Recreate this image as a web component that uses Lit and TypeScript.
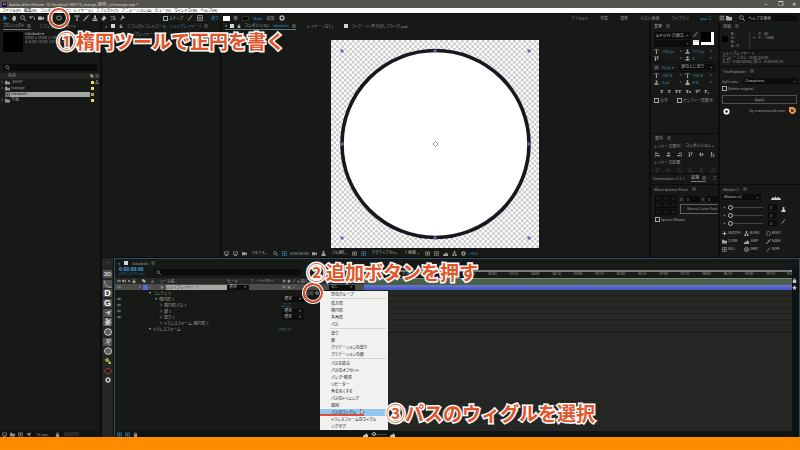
import { LitElement, html, svg, css, nothing } from "lit";
import { customElement } from "lit/decorators.js";
import { classMap } from "lit/directives/class-map.js";

// Icon drawings on a 12 x 12 grid; they take the colour of the surrounding text.
const line = (d: string, w = 1.6) => svg`<path d=${d} fill="none" stroke="currentColor" stroke-width=${w} />`;
const solid = (d: string) => svg`<path d=${d} fill="currentColor" />`;
const ICONS: Record<string, unknown> = {
  arrow: solid("M3 0L11 8L7 8L3 12Z"),
  hand: solid("M2 6L3 5L4 6V2H5.5V1H7V2H8.5V3H10V8L8 12H5L2 8Z"),
  zoom: svg`${line("M8 8L11.5 11.5", 2)}<circle cx="5" cy="5" r="3.6" fill="none" stroke="currentColor" stroke-width="1.5"/>`,
  rotate: line("M2 2V6H6M2.5 5.5C5 1 11 3 11 8V10"),
  camera: solid("M0 3H8V10H0ZM8 6L12 3V10L8 8Z"),
  anchor: svg`${line("M1 1H11V11H1Z", 1.4)}${line("M6 3V9M3 6H9")}`,
  ellipse: svg`<ellipse cx="6" cy="6" rx="5" ry="4" fill="none" stroke="currentColor" stroke-width="1.5"/>`,
  type: solid("M1 1H11V4H10L9 2.6H7V11H8V12H4V11H5V2.6H3L2 4H1Z"),
  brush: solid("M11 0L12 1L5 9L3 7ZM2.5 8L4.5 10L1 12L0 11Z"),
  stamp: solid("M4 1H8V4L7 7H11V9H1V7H5L4 4ZM1 10H11V12H1Z"),
  eraser: solid("M6 1L11 6L6 11H3L1 8Z"),
  roto: line("M1 2L4 5L7 2L10 6V11M2 10L9 7"),
  pin: solid("M6 0L12 6L10 7L8 6L5 9L1 12L4 8L6 4Z"),
  menu: line("M1 2.5H11M1 6H11M1 9.5H11", 1.5),
  down: solid("M2 4H10L6 9Z"),
  right: line("M4 2L8 6L4 10", 1.8),
  tag: solid("M0 1H6L12 7L7 12L0 6Z"),
  net: svg`${line("M6 3V6M3 9V6H9V9", 1.3)}${solid("M4 0H8V4H4ZM1 8H5V12H1ZM7 8H11V12H7Z")}`,
  folder: solid("M0 2H5L6 4H12V11H0Z"),
  comp: svg`${line("M1 2H11V10H1Z")}${solid("M4 4H8V8H4Z")}`,
  lock: svg`${solid("M2 5H10V12H2Z")}${line("M4 5V2H8V5")}`,
  eye: svg`${line("M0 6Q6 0 12 6Q6 12 0 6Z")}<circle cx="6" cy="6" r="2" fill="currentColor"/>`,
  dot: svg`<circle cx="6" cy="6" r="3" fill="currentColor"/>`,
  sound: solid("M0 4H3L6 1V11L3 8H0ZM8 3L11 1V11L8 9Z"),
  star: solid("M6 0L7.6 4.2L12 4.5L8.7 7.4L9.8 12L6 9.4L2.2 12L3.3 7.4L0 4.5L4.4 4.2Z"),
  gear: svg`<circle cx="6" cy="6" r="3.8" fill="none" stroke="currentColor" stroke-width="3"/>`,
  ring: svg`<circle cx="6" cy="6" r="5" fill="none" stroke="currentColor" stroke-width="1.3"/>`,
  cross: line("M6 1V11M1 6H11", 2.6),
  slash: line("M2 11L10 1"),
  grid: line("M1 1H11V11H1ZM1 6H11M6 1V11", 1.3),
  monitor: svg`${line("M1 2H11V8H1Z")}${solid("M3 10H9V12H3Z")}`,
  person: solid("M4 0H8V4H7L11 9V12H1V9L5 4H4Z"),
  mountain: solid("M0 10L3 6L5 8L8 2L10 7L12 5V12H0Z"),
  curve: line("M1 1Q1 11 11 11", 1.2),
  globe: svg`<circle cx="6" cy="6" r="5" fill="none" stroke="currentColor" stroke-width="1.6"/>${line("M1 6H11M3 3H9M3 9H9", 1.1)}`,
  burst: solid("M5 0L7 3L11 1L9 5L12 8L8 8L9 12L5 10L1 12L3 8L0 6L4 5L2 1Z"),
  key: svg`<circle cx="4" cy="4" r="2.7" fill="none" stroke="currentColor" stroke-width="2"/>${line("M6 6L11 11M10 7V11H7", 2)}`,
  diamond: line("M0 6L4 2H8L12 6L8 10H4Z", 1.4),
  plane: solid("M0 5L12 1L8 12L6 7Z"),
  runner: line("M6 2V6L2 8M6 6L11 4M6 6L8 11M3 3L10 2", 1.4),
  alignL: solid("M1 0H2.5V12H1ZM3 2H8V5H3ZM3 7H12V10H3Z"),
  alignC: solid("M5.3 0H6.7V12H5.3ZM3 2H9V5H3ZM1 7H11V10H1Z"),
  alignR: solid("M9.5 0H11V12H9.5ZM4 2H9V5H4ZM0 7H9V10H0Z"),
  alignT: solid("M0 1H12V2.5H0ZM2 3H5V12H2ZM7 3H10V8H7Z"),
  alignM: solid("M0 5.3H12V6.7H0ZM2 1H5V11H2ZM7 3H10V9H7Z"),
  alignB: solid("M0 9.5H12V11H0ZM2 0H5V9H2ZM7 4H10V9H7Z"),
};
const icon = (name: string) => html`<svg class="i" viewBox="0 0 12 12" aria-hidden="true">${ICONS[name]}</svg>`;
const tool = (name: string, label: string, cls = "") =>
  html`<button class="tool ${cls}" aria-label=${label}>${icon(name)}</button>`;
const drop = (label: string, value: string, cls = "") =>
  html`<span class="drop ${cls}"><select aria-label=${label}><option>${value}</option></select>${icon("down")}</span>`;

const base = css`
  :host { display: block; box-sizing: border-box; }
  *, *::before, *::after { box-sizing: border-box; }
  button, input, select {
    font: inherit; font-feature-settings: inherit; color: inherit; background: none;
    border: 0; margin: 0; padding: 0; min-width: 0; border-radius: 0; appearance: none; text-align: left;
  }
  .i { width: 5px; height: 5px; display: block; flex: none; }
  .tool { display: grid; place-items: center; width: 8px; height: 6px; flex: none; }
  .row { display: flex; align-items: center; }
  .panel { background: #171916; min-width: 0; overflow: hidden; }
  .tabs { display: flex; align-items: center; height: 8px; gap: 4px; padding: 0 3px; white-space: nowrap; }
  .tabs .i { width: 4px; height: 4px; }
  .tab { display: flex; align-items: center; gap: 3px; height: 8px; }
  .tab.on { color: #b4b4b0; border-bottom: 1px solid #777a78; }
  .sq { width: 4px; height: 4px; background: #d4d4d0; flex: none; }
  .drop { display: flex; align-items: center; height: 6px; background: #0b0c0b; padding: 0 2px; min-width: 0; color: #b4b4b0; }
  .drop select { flex: 1; height: 6px; line-height: 6px; }
  .drop .i { width: 3px; height: 3px; opacity: .7; }
  .field { background: #0a0b0a; height: 6px; }
  .box { width: 5px; height: 5px; border: 1px solid #a4a4a0; flex: none; }
  .check { display: flex; align-items: center; gap: 1px; white-space: nowrap; }
  .blue { color: #3c86b8; }
  .grow { flex: 1; }
`;

@customElement("project-panel")
class ProjectPanel extends LitElement {
  static styles = [base, css`
    :host { background: #171916; display: flex; flex-direction: column; min-width: 0; overflow: hidden; }
    .tabs { gap: 8px; }
    .info { display: flex; gap: 2px; padding: 2px 3px; height: 34px; }
    .thumb { width: 20px; height: 20px; background: #000; }
    .meta { line-height: 4px; white-space: nowrap; }
    .meta b { color: #b4b4b0; font-weight: 400; }
    .search { margin: 0 3px; display: flex; align-items: center; gap: 2px; padding-left: 2px; background: #0a0b0a; height: 7px; }
    .search input { flex: 1; }
    table { border-collapse: collapse; table-layout: fixed; width: 100%; margin-top: 2px; line-height: 6px; }
    td, th { padding: 0; height: 6px; font-weight: 400; text-align: left; vertical-align: middle; }
    th { background: #222421; }
    .c0 { width: 5px; } .c2 { width: 10px; }
    .name { display: flex; align-items: center; gap: 1px; height: 6px; }
    th .name { padding-left: 3px; }
    .sel .name { background: #a3a5a1; color: #222; height: 5px; }
    .label { width: 3px; height: 3px; background: #e8dc4a; margin-left: 1px; }
    .sel .label { background: #aca47c; }
    .ics { display: flex; gap: 1px; align-items: center; }
    .ics .i, .c0i .i { width: 4px; height: 4px; }
    .foot { margin-top: auto; height: 6px; background: #101110; display: flex; align-items: center; }
    .bar { width: 15px; height: 4px; background: #2a2a2a; margin-left: 2px; }
  `];
  render() {
    const rows = [["folder", "_EGSP"], ["folder", "footage"], ["comp", "fukidashi"], ["folder", "平面"]];
    return html`
      <div class="tabs"><span class="tab on">プロジェクト ${icon("menu")}</span><span class="tab">エフェクト&amp;プリセット</span></div>
      <div class="info"><div class="thumb"></div><div class="meta"><b>fukidashi ▾</b><br>2000 x 2000 (1.00)<br>Δ 0:00:10:00, 23.976 fps</div></div>
      <div class="search">${icon("zoom")}<input aria-label="プロジェクトを検索"></div>
      <table>
        <colgroup><col class="c0"><col><col class="c2"></colgroup>
        <tr><th></th><th><span class="name">名前<span class="grow"></span></span></th><th><span class="ics">${icon("tag")}${icon("menu")}</span></th></tr>
        ${rows.map(([ic, name], n) => html`<tr class=${classMap({ sel: n === 2 })}>
          <td class="c0i">${n === 2 ? nothing : icon("right")}</td>
          <td><span class="name">${icon(ic)}${name}</span></td>
          <td><span class="ics"><span class="label"></span>${n === 0 ? icon("net") : nothing}</span></td></tr>`)}
      </table>
      <div class="foot">${tool("monitor", "フッテージを変換")}${tool("folder", "新規フォルダー")}${tool("comp", "新規コンポジション")}${tool("plane", "設定")}<span class="grow">　16 bpc</span>${tool("lock", "削除")}<span class="bar"></span><span class="grow"></span></div>`;
  }
}

@customElement("viewer-panel")
class ViewerPanel extends LitElement {
  static styles = [base, css`
    :host { background: #171916; display: flex; flex-direction: column; min-width: 0; overflow: hidden; }
    .tabs { gap: 11px; }
    .tab.on { border-color: #5c7a8c; }
    .stage { flex: 1; display: flex; align-items: center; justify-content: center; padding: 8px 2px 0 0; }
    .art { width: 208px; height: 208px; display: block; }
    .foot { height: 8px; display: flex; align-items: center; gap: 3px; padding-left: 1px; white-space: nowrap; color: #a0a09c; }
    .foot .tool { width: 6px; }
    .drop { background: none; }
    .w1 { width: 19px; } .w2 { width: 30px; }
  `];
  render() {
    const marks = [[11, 11], [104, 11], [198, 11], [11, 104], [198, 104], [11, 198], [104, 198], [198, 198]];
    return html`
      <div class="tabs"><span class="tab on">×<i class="sq"></i>${icon("lock")}コンポジション <span class="blue">fukidashi</span>${icon("menu")}</span>
        <span class="tab">レイヤー: (なし)</span><span class="tab"><i class="sq"></i>フッテージ: 吹き出しブラック.psd</span></div>
      <div class="stage"><svg class="art" viewBox="0 0 208 208" role="img" aria-label="fukidashi">
        <defs><pattern id="chk" width="5.2" height="5.2" patternUnits="userSpaceOnUse"><rect width="5.2" height="5.2" fill="#fff"/><path d="M0 0H2.6V2.6H0ZM2.6 2.6H5.2V5.2H2.6Z" fill="#cbcbcb"/></pattern></defs>
        <rect width="208" height="208" fill="url(#chk)"/>
        <circle cx="104.500" cy="104" r="93.500" fill="#fff" stroke="#17171f" stroke-width="3.600"/>
        ${marks.map(([x, y]) => svg`<rect x=${x - 1.5} y=${y - 1.5} width="3" height="3" fill="#6a6aae"/>`)}
        <path d="M104.500 101.500L107 104L104.500 106.500L102 104Z" fill="none" stroke="#777" stroke-width="0.800"/>
      </svg></div>
      <div class="foot">${tool("monitor", "プレビュー")}${tool("monitor", "表示")}${tool("camera", "ビュー")}${drop("倍率", "(10.1 %)", "w1")}${tool("zoom", "領域")}${tool("anchor", "マスク", "blue")}<span>0:00:00:00</span>${tool("camera", "スナップショット")}${tool("person", "チャンネル")}${drop("解像度", "フル画質", "w1")}${tool("comp", "関心領域")}${tool("grid", "透明グリッド", "blue")}${drop("カメラ", "アクティブカメラ", "w2")}${drop("画面", "1 画面", "w1")}${tool("comp", "ピクセル縦横比")}${tool("anchor", "高速プレビュー")}${tool("mountain", "タイムライン")}${tool("net", "フローチャート")}${tool("gear", "露出")}<span class="blue">+0.0</span></div>`;
  }
}

@customElement("type-panels")
class TypePanels extends LitElement {
  static styles = [base, css`
    :host { display: flex; flex-direction: column; min-width: 0; overflow: hidden; gap: 1px; }
    .char { height: 111px; }
    .fonts { display: flex; gap: 2px; padding: 2px 3px 0; height: 18px; }
    .faces { width: 37px; display: grid; gap: 1px; align-content: start; }
    .faces .drop { height: 7px; }
    .mini { display: grid; gap: 3px; align-content: start; }
    .under { width: 6px; height: 5px; background: linear-gradient(#ddd 50%, #fff 50%); }
    .sw { width: 13px; height: 13px; background: #000; border: 3px solid #fff; border-width: 0 3px 3px 0; }
    .sw i { display: block; width: 10px; height: 10px; background: #000; }
    .vals { display: grid; grid-template-columns: 8px 1fr 5px 8px 1fr 5px; align-items: center; padding: 0 3px; height: 14px; color: #3c86b8; white-space: nowrap; }
    .vals .i { color: #a8a8a4; } .vals .s { width: 3px; color: #999; font-size: 3px; }
    .leading { display: flex; align-items: center; gap: 2px; padding: 0 3px; height: 10px; border: 1px solid #0c0d0c; border-width: 1px 0; }
    .leading .drop { flex: 1; }
    .num { width: 16px; }
    .styles { display: flex; justify-content: center; gap: 4px; height: 10px; align-items: center; font-family: "Liberation Serif", serif; font-size: 5px; color: #ccc; font-weight: 700; }
    .checks { display: flex; justify-content: space-between; padding: 2px 5px 0 3px; }
    .align { height: 39px; padding-left: 1px; }
    .align .row { gap: 2px; padding: 0 2px; height: 8px; white-space: nowrap; }
    .align .icons { justify-content: space-between; gap: 0; padding: 0 2px 0 1px; height: 8px; }
    .align .off { opacity: .22; }
    .align .drop { flex: 1; background: none; }
    .strip { flex: none; height: 10px; }
    .strip .tabs { justify-content: space-between; padding: 0 2px; gap: 2px; }
    .move { flex: 1; }
    .anchor { display: grid; grid-template-columns: 22px 1fr; gap: 3px; padding: 2px 0 0 4px; }
    .pts { display: grid; grid-template-columns: 1fr 1fr 1fr; grid-auto-rows: 6px; gap: 1px; height: 20px; }
    .pts button { border: 1px solid #050605; }
    .xy { display: flex; gap: 2px; height: 8px; align-items: center; }
    .xy .field { width: 15px; padding-left: 2px; }
    .go { border: 1px solid #60625f; height: 10px; width: 100%; border-right: 0; text-align: right; margin-top: 1px; font-size: 3px; white-space: nowrap; }
    .ign { padding: 2px 4px; }
  `];
  render() {
    return html`
      <section class="panel char">
        <div class="tabs"><b>文字</b>${icon("menu")}</div>
        <div class="fonts"><div class="faces">${drop("フォント", "A-P-OTF 凸版文…")}${drop("スタイル", "-")}</div><div class="mini">${icon("brush")}<i class="under"></i></div><div class="sw"><i></i></div></div>
        <div class="vals">${icon("type")}<span>100 px</span><span class="s">▾</span>${icon("stamp")}<span>117 px</span><span class="s">▾</span>${icon("alignT")}<span></span><span class="s">▾</span>${icon("alignC")}<span>0</span><span class="s">▾</span></div>
        <div class="leading">${icon("menu")}<span class="num blue">10 px ▾</span>${drop("線の順序", "線の上に塗り")}</div>
        <div class="vals">${icon("type")}<span>100 %</span><span class="s">▾</span>${icon("type")}<span>100 %</span><span class="s">▾</span>${icon("stamp")}<span>0 px</span><span class="s">▾</span>${icon("person")}<span>0 %</span><span class="s">▾</span></div>
        <div class="styles">${["T", "T", "TT", "Tт", "T¹", "T₁"].map((t) => html`<button>${t}</button>`)}</div>
        <div class="checks"><label class="check"><input type="checkbox" class="box">合字</label><label class="check"><input type="checkbox" class="box">ヒンディー語数字</label></div>
      </section>
      <section class="panel align">
        <div class="tabs">整列 ${icon("menu")}</div>
        <div class="row">レイヤーを整列:${drop("整列対象", "コンポジション")}</div>
        <div class="row icons">${["alignL", "alignC", "alignR", "alignT", "alignM", "alignB"].map((n) => tool(n, n))}</div>
        <div class="row">レイヤーを配置:</div>
        <div class="row icons off">${["alignT", "alignM", "alignB", "alignL", "alignC", "alignR"].map((n) => tool(n, n))}</div>
      </section>
      <section class="panel strip"><div class="tabs"><span>Screenshot v1.2.1</span><span class="tab on">段落 ${icon("menu")}</span><span>ブ</span></div></section>
      <section class="panel move">
        <div class="tabs">Move Anchor Point ${icon("menu")}</div>
        <div class="anchor"><div class="pts">${[1, 2, 3, 4, 5, 6, 7, 8, 9].map((n) => html`<button aria-label="Anchor ${n}"></button>`)}</div>
          <div><div class="xy">X<input class="field" aria-label="X" value="0">Y<input class="field" aria-label="Y" value="0"></div><button class="go">Move to Custom Position</button></div></div>
        <label class="check ign"><input type="checkbox" class="box">Ignore Masks</label>
      </section>`;
  }
}

@customElement("side-panels")
class SidePanels extends LitElement {
  static styles = [base, css`
    :host { display: flex; flex-direction: column; min-width: 0; overflow: hidden; gap: 1px; }
    .info { height: 44px; }
    .rgb { display: flex; gap: 3px; padding: 2px 2px 0; height: 20px; line-height: 4px; }
    .chip { width: 6px; height: 6px; margin-top: 4px; background: #000; }
    .chan { width: 19px; border-right: 1px solid #303230; height: 17px; }
    .lines { border-top: 1px solid #0a0b0a; padding: 1px 2px; line-height: 4px; white-space: nowrap; }
    .text { height: 117px; }
    .split { display: flex; gap: 4px; align-items: center; padding: 3px 2px 0; white-space: nowrap; }
    .split .drop { flex: 1; }
    .del { padding: 2px; height: 9px; }
    .apply { display: block; width: calc(100% - 5px); margin: 2px 2px 0; height: 9px; border: 1px solid #50524f; text-align: center; }
    .by { display: flex; align-items: center; justify-content: flex-end; gap: 4px; padding: 3px 4px 3px 2px; height: 13px; }
    .by .tool { margin-right: auto; color: #fff; }
    .by .i { width: 7px; height: 7px; }
    .logo { display: block; width: 7px; height: 7px; color: #e59450; }
    .motion { flex: 1; }
    .top { display: flex; align-items: center; gap: 10px; padding: 1px 2px 3px; }
    .top .drop { width: 39px; }
    .top .wide { width: 10px; height: 5px; }
    .slides { display: grid; grid-template-columns: minmax(0, 1fr) 6px; gap: 3px; padding: 0 14px 0 3px; }
    .slide { display: flex; align-items: center; height: 8px; gap: 2px; }
    .slide .i { width: 3px; height: 3px; }
    .slide input[type="range"] { flex: 1; height: 6px; background: linear-gradient(#444, #444) center / 100% 1px no-repeat; }
    .slide input::-webkit-slider-thumb { appearance: none; width: 5px; height: 5px; border: 1px solid #bbb; border-radius: 50%; background: #171916; }
    .slide .field { width: 9px; padding-left: 2px; margin-left: 3px; }
    .side { display: grid; align-content: space-around; justify-items: center; color: #ccc; }
    .acts { display: grid; grid-template-columns: 22px 22px 22px; grid-auto-rows: 8px; padding: 2px 2px 0; font-size: 3px; color: #a8a8a4; }
    .acts button { display: flex; align-items: center; gap: 1px; }
  `];
  render() {
    const acts = [["cross", "SMOOTH"], ["net", "BLEND"], ["ring", "BURST"], ["folder", "CLONE"], ["mountain", "JUMP"], ["brush", "NAME"], ["grid", "NULL"], ["globe", "ORBIT"], ["slash", "ROPE"]];
    return html`
      <section class="panel info">
        <div class="tabs">情報 ${icon("menu")}</div>
        <div class="rgb"><i class="chip"></i><div class="chan">R :<br>G :<br>B :<br>A : 0</div><span>&nbsp;<br>+</span><span>X : 45<br>Y : -1088</span></div>
        <div class="lines">シェイプレイヤー 1<br>デュレーション : 0:00:10:00<br>入力 : 0:00:00:00, 出力 : 0:00:09:23</div>
      </section>
      <section class="panel text">
        <div class="tabs">TextExploder ${icon("menu")}</div>
        <div class="split"><span>Split into:</span>${drop("Split into", "Characters")}</div>
        <label class="check del"><input type="checkbox" class="box">Delete original</label>
        <button class="apply">Apply</button>
        <div class="by">${tool("gear", "Settings")}<span>by mamoworld.com</span><svg class="logo" viewBox="0 0 12 12" aria-hidden="true"><path d="M0 0H8L12 4V8L8 12H4L0 8Z" fill="currentColor"/><path d="M4 3L9 7L4 9Z" fill="#171916"/></svg></div>
      </section>
      <section class="panel motion">
        <div class="tabs">Motion 2 ${icon("menu")}</div>
        <div class="top">${drop("Preset", "Motion v2")}<svg class="wide" viewBox="0 0 24 12" aria-hidden="true"><path d="M0 10L5 5L8 8L11 3L14 8L18 5L24 10V12H0Z" fill="#ccc"/></svg></div>
        <div class="slides"><div>${["left", "both", "right"].map((n) => html`<div class="slide">${icon("dot")}<input type="range" aria-label=${n} value="0"><input class="field" aria-label="${n} value" value="0"></div>`)}</div>
          <div class="side">${icon("person")}${icon("slash")}</div></div>
        <div class="acts">${acts.map(([i, t]) => html`<button>${icon(i)}${t}</button>`)}</div>
      </section>`;
  }
}

@customElement("timeline-panel")
class TimelinePanel extends LitElement {
  static styles = [base, css`
    :host { position: relative; display: flex; flex-direction: column; background: #171916; border: 1px solid #2c4f68; border-bottom: 0; min-width: 0; }
    .body { flex: 1; display: grid; grid-template-columns: 249px 1fr 7px; min-height: 0; }
    .head { display: flex; height: 11px; padding: 0 4px; gap: 9px; }
    .code { line-height: 5px; color: #1f5f86; font-size: 3px; white-space: nowrap; }
    .code b { display: block; font-size: 5px; color: #45a8e0; font-family: "Liberation Sans", sans-serif; }
    .search { display: flex; align-items: center; padding-left: 2px; background: #0a0b0a; height: 6px; width: 147px; margin-top: 2px; }
    .search input { flex: 1; }
    .r { display: grid; grid-template-columns: 23px 22px 67px 24px 27px 51px 1fr; height: 6px; align-items: center; white-space: nowrap; }
    .r > * { display: flex; align-items: center; gap: 1px; min-width: 0; height: 6px; }
    .r .i { width: 4px; height: 4px; }
    .heads { background: #272927; color: #a8a8a4; }
    .heads .tm { gap: 4px; font-size: 3px; }
    .layer { background: #4b4d4b; }
    .nm { background: #a6a8a4; color: #333; height: 5px; flex: 1; line-height: 5px; margin-left: 1px; }
    .lab { width: 5px; height: 5px; background: #5a68d0; }
    .r .drop { width: 22px; height: 5px; }
    .r .par { width: 26px; }
    .eye { padding-left: 2px; }
    .d0 { padding-left: 10px; } .d1 { padding-left: 16px; } .d2 { padding-left: 21px; }
    .r .name { grid-column: 2 / 6; color: #a0a29e; }
    .sb { padding-left: 4px; }
    .add { padding-left: 27px; }
    .graph { display: flex; flex-direction: column; background: #171916; overflow: hidden; }
    .range { height: 2px; background: #777976; border-left: 2px solid #4c9ed0; border-right: 2px solid #4c9ed0; margin-top: 3px; }
    .ruler { display: flex; height: 6px; font-size: 3px; line-height: 5px; overflow: hidden; white-space: nowrap; color: #a0a29e; }
    .tick { flex: 2 0 0; min-width: 0; text-align: center; }
    .half { flex: 1 0 0; min-width: 0; text-align: right; }
    .cache { height: 7px; background: #47604a; border-top: 1px solid #80827e; }
    .bar { height: 5px; background: linear-gradient(#6c78cc, #4452c4); }
    .lanes { height: 42px; background: repeating-linear-gradient(#262826 0 5px, #1e201e 5px 6px); }
    .rest { flex: 1; background: #242624; border-top: 1px solid #1c1e1c; }
    .edge { background: #101210; padding-top: 11px; display: grid; gap: 2px; align-content: start; color: #ccc; }
    .foot { height: 6px; background: #101110; display: flex; align-items: center; }
    .foot .zoomer { margin-left: 224px; display: flex; align-items: center; gap: 3px; color: #ccc; }
    .zoomer input { width: 16px; height: 5px; background: linear-gradient(#444, #444) center / 100% 1px no-repeat; }
    .zoomer input::-webkit-slider-thumb { appearance: none; width: 4px; height: 4px; border: 1px solid #bbb; border-radius: 50%; }
    .menu { position: absolute; left: 205px; top: 32px; width: 68px; background: #f1f1f0; color: #111; display: flex; flex-direction: column; }
    .menu button { height: 7px; line-height: 7px; padding-left: 11px; white-space: nowrap; }
    .menu hr { margin: 0 2px 1px 10px; border: 0; height: 1px; background: #d4d4d4; }
    .menu .hot { color: #123; background: linear-gradient(90deg, #dc4f3c 65%, #93c6ec 65%) bottom / 100% 2px no-repeat #93c6ec; line-height: 6px; }
  `];
  render() {
    const labels: string[] = [];
    for (let n = 1; n < 20; n++) labels.push(`${String(n >> 1).padStart(2, "0")}:${n % 2 ? "12" : "00"}f`);
    const rows = [
      { t: "コンテンツ", d: "d0", k: "add" }, { t: "楕円形 1", d: "d1", k: "mode", eye: true },
      { t: "楕円形パス 1", d: "d2", k: "path", eye: true }, { t: "線 1", d: "d2", k: "mode", eye: true },
      { t: "塗り 1", d: "d2", k: "mode", eye: true }, { t: "トランスフォーム: 楕円形 1", d: "d2", k: "" },
      { t: "トランスフォーム", d: "d0", k: "reset" },
    ];
    const groups = [["空のグループ"], ["長方形", "楕円形", "多角形", "パス"], ["塗り", "線", "グラデーションの塗り", "グラデーションの線"],
      ["パスを結合", "パスのオフセット", "パンク・膨張", "リピーター", "角を丸くする", "パスのトリミング", "旋回", "パスのウィグル", "トランスフォームのウィグル", "ジグザグ"]];
    return html`
      <div class="tabs"><span>×</span><i class="sq"></i><span class="tab">fukidashi ${icon("menu")}</span></div>
      <div class="body">
        <div>
          <div class="head"><div class="code"><b>0:00:00:00</b>00000 (23.976 fps)</div><label class="search">${icon("zoom")}<input aria-label="レイヤーを検索"></label></div>
          <div class="r heads"><span class="eye">${icon("eye")}${icon("sound")}${icon("dot")}${icon("lock")}</span><span class="sb">${icon("tag")}　#</span><span>ソース名</span><span>モード</span><span class="tm"><span>T</span><span>トラックマット</span></span><span class="sb">${icon("cross")}${icon("star")}${icon("slash")}<i>fx</i>${icon("grid")}${icon("ring")}${icon("ring")}${icon("comp")}</span><span>親</span></div>
          <div class="r layer"><span class="eye">${icon("eye")}</span><span>${icon("down")}<i class="lab"></i> 1</span><span>${icon("star")}<span class="nm">シェイプレイヤー 1</span></span><span>${drop("モード", "通常")}</span><span></span><span class="sb">${icon("cross")}${icon("star")}${icon("slash")}</span><span>${drop("親", "なし", "par")}</span></div>
          ${rows.map((r) => html`<div class="r"><span class="eye">${r.eye ? icon("eye") : nothing}</span><span class="name ${r.d}">${icon(r.d === "d2" ? "right" : "down")} ${r.t}</span>
            ${r.k === "mode" ? html`<span class="sb">${drop("モード", "通常")}</span>` : r.k === "add" ? html`<button class="add">追加: ${icon("gear")}</button>` : r.k === "path" ? html`<span class="sb blue">⇄ ⇄</span>` : r.k === "reset" ? html`<button class="blue">リセット</button>` : nothing}</div>`)}
        </div>
        <div class="graph">
          <div class="range"></div>
          <div class="ruler"><span class="half"></span>${labels.map((l) => html`<span class="tick">${l}</span>`)}<span class="half">10:0</span></div>
          <div class="cache"></div><div class="bar"></div><div class="lanes"></div><div class="rest"></div>
        </div>
        <div class="edge">${icon("lock")}${icon("star")}</div>
      </div>
      <div class="foot"><span class="blue">${tool("comp", "スイッチ")}</span><span class="blue">${tool("comp", "モード")}</span>${tool("lock", "レンダリング")}<span class="zoomer">${icon("mountain")}<input type="range" aria-label="ズーム" value="10">${icon("mountain")}</span></div>
      <div class="menu" role="menu">${groups.map((g, n) => html`${n ? html`<hr>` : nothing}${g.map((t) => html`<button role="menuitem" class=${classMap({ hot: t === "パスのウィグル" })}>${t}</button>`)}`)}</div>`;
  }
}

@customElement("app-root")
class AppRoot extends LitElement {
  static styles = [base, css`
    :host {
      position: relative; display: flex; flex-direction: column; min-height: 100vh; overflow: hidden;
      background: #0b0c0b; color: #90928e; font: 4px/5px Roboto, "Noto Sans CJK JP", sans-serif; font-feature-settings: "palt";
    }
    .title { height: 8px; background: #55534d; color: #d0ccc6; display: flex; align-items: center; gap: 2px; padding: 0 2px; white-space: nowrap; }
    .ae { width: 5px; height: 5px; background: #1f1638; color: #b8a0ff; font-size: 3px; line-height: 5px; text-align: center; }
    .win { display: flex; gap: 6px; color: #eee; }
    .win button { width: 8px; text-align: center; font-size: 6px; line-height: 8px; }
    nav { height: 5px; background: #fdfdfb; color: #222; display: flex; gap: 3px; padding: 0 2px; line-height: 5px; white-space: nowrap; }
    .toolbar { height: 8px; margin-top: 1px; background: #171916; display: flex; align-items: center; padding: 0 3px 0 1px; gap: 1px; white-space: nowrap; color: #b0b0ac; }
    .toolbar .i { width: 6px; height: 6px; }
    .toolbar .cur { color: #3b9be0; }
    .gap { width: 5px; } .lead { width: 35px; }
    .opts { display: flex; align-items: center; gap: 4px; }
    .fill { width: 7px; height: 5px; background: #fff; } .stroke { width: 7px; height: 5px; background: #000; border: 1px solid #333; }
    .spaces { display: flex; align-items: center; gap: 12px; color: #90928e; }
    .help { display: flex; align-items: center; gap: 3px; width: 58px; background: #0b0c0b; margin-left: 6px; height: 6px; }
    .help input { flex: 1; color: #b4b4b0; }
    .help input::placeholder { color: #b4b4b0; }
    main { flex: 1; display: grid; grid-template-columns: 100px 1fr; gap: 2px; }
    .work { display: grid; grid-template-rows: 235px 1fr; gap: 1px; min-width: 0; }
    .upper { display: grid; grid-template-columns: 118px 1fr 67px 80px; gap: 2px; }
    .upper > * { min-width: 0; }
    .lower { display: grid; grid-template-columns: 11px 1fr; gap: 1px; }
    .scripts { background: #252725; display: flex; flex-direction: column; align-items: center; padding-top: 2px; color: #c4c4c0; }
    .stack { height: 116px; margin-top: 4px; display: flex; flex-direction: column; }
    .stack button { flex: 1; display: grid; place-items: center; }
    .stack span { display: grid; place-items: center; width: 9px; height: 8px; }
    .stack .tile { background: #50524f; }
    .stack .chr { color: #fff; font: 700 9px/8px "Liberation Sans", sans-serif; }
    .stack .chr.sm { font-size: 6px; color: #ccc; }
    .stack .i { width: 8px; height: 8px; }
    .stack .small .i { width: 6px; height: 6px; }
    .gold { color: #e8d84c; } .red { color: #b03040; }
    .sub { padding: 2px 4px; }
    footer { height: 13px; background: #ff8c00; }
    .note { position: absolute; margin: 0; font: 700 19px/24px "Noto Sans CJK JP", sans-serif; color: #e2552a; -webkit-text-stroke: 3px #fff; paint-order: stroke fill; white-space: nowrap; font-feature-settings: normal; }
    .n1 { left: 57px; top: 29px; } .n2 { left: 307px; top: 260px; } .n3 { left: 386px; top: 401px; }
    .halo { position: absolute; width: 20px; height: 20px; border-radius: 50%; border: 2px solid #d8502c; box-shadow: 0 0 0 1px #fff, inset 0 0 0 1px #fff; }
    .h1 { left: 49px; top: 8px; } .h2 { left: 303px; top: 283px; }
    .cursor { position: absolute; left: 360px; top: 409px; width: 5px; height: 6px; }
  `];
  render() {
    const menus = ["ファイル(F)", "編集(E)", "コンポジション(C)", "レイヤー(L)", "エフェクト(T)", "アニメーション(A)", "ビュー(V)", "ウィンドウ(W)", "ヘルプ(H)"];
    const scripts = [["3D", "tile", "sm"], ["curve", "tile"], ["D", "tile"], ["G", "tile"], ["plane", "tile small"], ["burst", "tile"], ["globe", ""], ["runner", "tile"], ["globe", ""], ["key", "gold small"], ["diamond", "red"], ["gear", "small"]];
    return html`
      <header class="title"><span class="ae">Ae</span><span class="grow">Adobe After Effects - D:\\Desktop\\180715_manga_開発\\_iui\\manga.aep *</span>
        <span class="win"><button aria-label="最小化">–</button><button aria-label="元に戻す">❐</button><button aria-label="閉じる">×</button></span></header>
      <nav>${menus.map((m) => html`<button>${m}</button>`)}</nav>
      <div class="toolbar">
        ${tool("arrow", "選択", "cur")}${tool("hand", "手のひら")}${tool("zoom", "ズーム")}${tool("rotate", "回転")}${tool("camera", "カメラ")}${tool("anchor", "アンカーポイント")}${tool("ellipse", "楕円形")}${tool("pin", "ペン")}${tool("type", "文字")}${tool("brush", "ブラシ")}${tool("stamp", "コピースタンプ")}${tool("eraser", "消しゴム")}${tool("roto", "ロトブラシ")}${tool("pin", "パペットピン")}
        <span class="lead"></span>
        <span class="opts"><label class="check"><input type="checkbox" class="box">スナップ</label>${icon("slash")}${icon("grid")}<span></span><span class="cur">塗り</span><i class="fill"></i><span>線</span><i class="stroke"></i><span class="cur">16 px</span><span>追加:</span>${icon("gear")}</span>
        <span class="grow"></span>
        <span class="spaces"><span>デフォルト</span><span>学習</span><span>標準</span><span>小さい画面</span><span>ライブラリ</span><span class="cur">yuu ≡</span></span>
        <span class="gap"></span>${icon("menu")}${icon("folder")}<label class="help">${icon("zoom")}<input aria-label="ヘルプを検索" placeholder="ヘルプを検索"></label>
      </div>
      <main>
        <project-panel></project-panel>
        <div class="work">
          <div class="upper">
            <section class="panel"><div class="tabs"><span>×</span><i class="sq"></i>${icon("lock")}<span class="tab">エフェクトコントロール <span class="blue">シェイプレイヤー 1</span> ${icon("menu")}</span></div><div class="sub">fukidashi・シェイプレイヤー 1</div></section>
            <viewer-panel></viewer-panel><type-panels></type-panels><side-panels></side-panels>
          </div>
          <div class="lower">
            <aside class="scripts">›<div class="stack">${scripts.map(([n, c, s]) => html`<button aria-label=${n}><span class=${c}>${ICONS[n] ? icon(n) : html`<span class="chr ${s ?? ""}">${n}</span>`}</span></button>`)}</div></aside>
            <timeline-panel></timeline-panel>
          </div>
        </div>
      </main>
      <footer></footer>
      <i class="halo h1"></i><i class="halo h2"></i>
      <p class="note n1">①楕円ツールで正円を書く</p><p class="note n2">②追加ボタンを押す</p><p class="note n3">③パスのウィグルを選択</p>
      <svg class="cursor" viewBox="0 0 10 12" aria-hidden="true"><path d="M1 0L9 7H5L2 11Z" fill="#fff" stroke="#222"/></svg>`;
  }
}
